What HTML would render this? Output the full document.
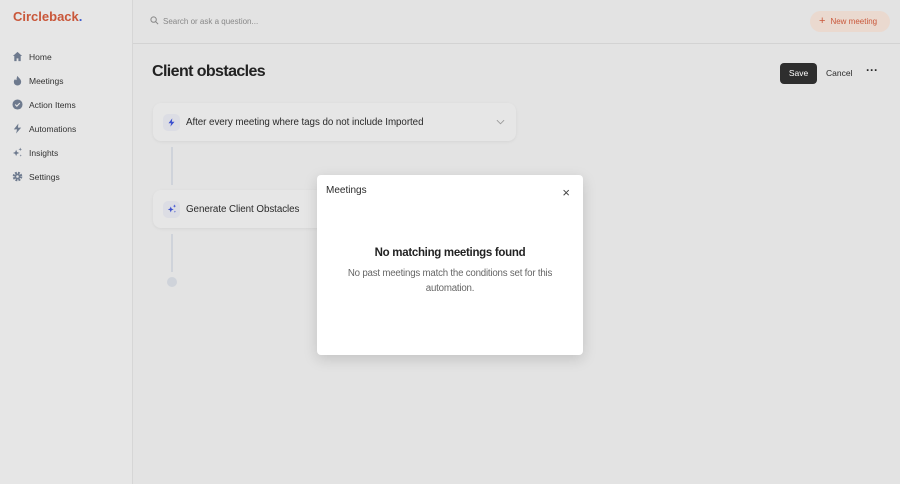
<!DOCTYPE html><html><head><style>
*{margin:0;padding:0;box-sizing:border-box}
body{width:900px;height:484px;background:#e3e3e3;font-family:"Liberation Sans",sans-serif;position:relative;overflow:hidden;color:#2a2a2a}
.side{position:absolute;left:0;top:0;width:133px;height:484px;background:#e6e6e6;border-right:1px solid #d6d6d6}
.logo{position:absolute;left:13px;top:9px;font-size:13px;font-weight:bold;color:#c9573a}
.logo b{color:#3b5bd0}
.nav{position:absolute;left:12px;font-size:8.5px;color:#333;display:flex;align-items:center}
.nav i{width:11px;height:11px;margin-right:6px;display:inline-block;color:#6e7a8e}
.top{position:absolute;left:133px;top:0;right:0;height:44px;border-bottom:1px solid #d3d3d3}
.search{position:absolute;left:150px;top:16px;font-size:8px;color:#888}
.nm{position:absolute;left:810px;top:11px;width:80px;height:21px;border-radius:11px;background:#ead9cf;color:#c9573a;font-size:8px;line-height:21px;padding-left:9px}
h1{position:absolute;left:152px;top:63px;font-size:16px;letter-spacing:-0.6px;font-weight:bold;color:#222}
.save{position:absolute;left:780px;top:63px;width:37px;height:21px;background:#2e2e2e;border-radius:4px;color:#fff;font-size:8.5px;text-align:center;line-height:21px}
.cancel{position:absolute;left:826px;top:68px;font-size:8.5px}
.dots{position:absolute;left:866px;top:63px;font-size:12px;font-weight:bold}
.card{position:absolute;left:153px;background:#e6e6e6;border-radius:8px;box-shadow:0 1px 3px rgba(0,0,0,.06);font-size:9.8px;letter-spacing:-0.06px;display:flex;align-items:center}
.ic{width:17px;height:17px;border-radius:5px;background:#dcdde4;margin:0 6px 0 10px;display:flex;align-items:center;justify-content:center}
.line{position:absolute;left:171px;width:2px;background:#cfd3da}
.modal{position:absolute;left:317px;top:175px;width:266px;height:180px;background:#fff;border-radius:4px;box-shadow:0 4px 14px rgba(0,0,0,.15)}
</style></head><body>
<div class="side">
<div class="logo">Circleback<b>.</b></div>
<div class="nav" style="top:51px"><i><svg width="11" height="11" viewBox="0 0 12 12"><path d="M6 1L1 5.5h1.5V11h2.5V8h2v3h2.5V5.5H11z" fill="#6e7a8e"/></svg></i>Home</div>
<div class="nav" style="top:75px"><i><svg width="11" height="11" viewBox="0 0 12 12"><path d="M6 1c1 2 4 3.5 4 6.5a4 4 0 0 1-8 0c0-1.5.8-2.5 1.5-3C4 6 5 6 5 4.5 5 3 6 1 6 1z" fill="#6e7a8e"/></svg></i>Meetings</div>
<div class="nav" style="top:99px"><i><svg width="11" height="11" viewBox="0 0 12 12"><circle cx="6" cy="6" r="5.5" fill="#6e7a8e"/><path d="M3.5 6l1.8 1.8L8.5 4.5" stroke="#e6e6e6" stroke-width="1.3" fill="none"/></svg></i>Action Items</div>
<div class="nav" style="top:123px"><i><svg width="11" height="11" viewBox="0 0 12 12"><path d="M7 0.5L2 7h3.5L4.5 11.5 10 5H6.5z" fill="#6e7a8e"/></svg></i>Automations</div>
<div class="nav" style="top:147px"><i><svg width="11" height="11" viewBox="0 0 12 12"><path d="M4.5 3l1 2.5 2.5 1-2.5 1-1 2.5-1-2.5L1 6.5l2.5-1zM9 .5l.5 1.5L11 2.5 9.5 3 9 4.5 8.5 3 7 2.5l1.5-.5zM9.5 8l.3 1 1 .3-1 .3-.3 1-.3-1-1-.3 1-.3z" fill="#6e7a8e"/></svg></i>Insights</div>
<div class="nav" style="top:171px"><i><svg width="11" height="11" viewBox="0 0 12 12"><circle cx="6" cy="6" r="4" fill="none" stroke="#6e7a8e" stroke-width="2.5" stroke-dasharray="2 1.2"/><circle cx="6" cy="6" r="3.2" fill="#6e7a8e"/><circle cx="6" cy="6" r="1.4" fill="#e6e6e6"/></svg></i>Settings</div>
</div>
<div class="top"></div>
<div class="search"><svg width="9" height="9" viewBox="0 0 10 10" style="vertical-align:-1px;margin-right:4px"><circle cx="4" cy="4" r="3" fill="none" stroke="#888" stroke-width="1.1"/><path d="M6.3 6.3L9 9" stroke="#888" stroke-width="1.1"/></svg>Search or ask a question...</div>
<div class="nm"><span style="font-size:11px;margin-right:5px">+</span>New meeting</div>
<h1>Client obstacles</h1>
<div class="save">Save</div>
<div class="cancel">Cancel</div>
<div class="dots">···</div>
<div class="card" style="top:103px;width:363px;height:38px"><div class="ic"><svg width="9" height="9" viewBox="0 0 12 12"><path d="M7 0.5L2 7h3.5L4.5 11.5 10 5H6.5z" fill="#3b4fcf"/></svg></div>After every meeting where tags do not include Imported<svg style="position:absolute;right:11px" width="9" height="6" viewBox="0 0 10 6"><path d="M1 1l4 4 4-4" stroke="#999" fill="none"/></svg></div>
<div class="line" style="top:147px;height:38px"></div>
<div class="card" style="top:190px;width:200px;height:38px"><div class="ic"><svg width="10" height="10" viewBox="0 0 12 12"><path d="M4.5 3l1 2.5 2.5 1-2.5 1-1 2.5-1-2.5L1 6.5l2.5-1zM9 .5l.5 1.5L11 2.5 9.5 3 9 4.5 8.5 3 7 2.5l1.5-.5zM9.5 8l.3 1 1 .3-1 .3-.3 1-.3-1-1-.3 1-.3z" fill="#3b4fcf"/></svg></div>Generate Client Obstacles</div>
<div class="line" style="top:234px;height:38px"></div>
<div style="position:absolute;left:167px;top:277px;width:10px;height:10px;border-radius:50%;background:#cfd3da"></div>
<div class="modal">
<div style="position:absolute;left:9px;top:10px;font-size:10px">Meetings</div>
<div style="position:absolute;right:13px;top:10px;font-size:13px;color:#444">×</div>
<div style="position:absolute;left:0;right:0;top:72px;text-align:center;font-size:11.5px;letter-spacing:-0.3px;font-weight:bold;color:#222">No matching meetings found</div>
<div style="position:absolute;left:24px;right:24px;top:92px;text-align:center;font-size:9.7px;letter-spacing:-0.2px;line-height:14.5px;color:#666">No past meetings match the conditions set for this automation.</div>
</div>
</body></html>
